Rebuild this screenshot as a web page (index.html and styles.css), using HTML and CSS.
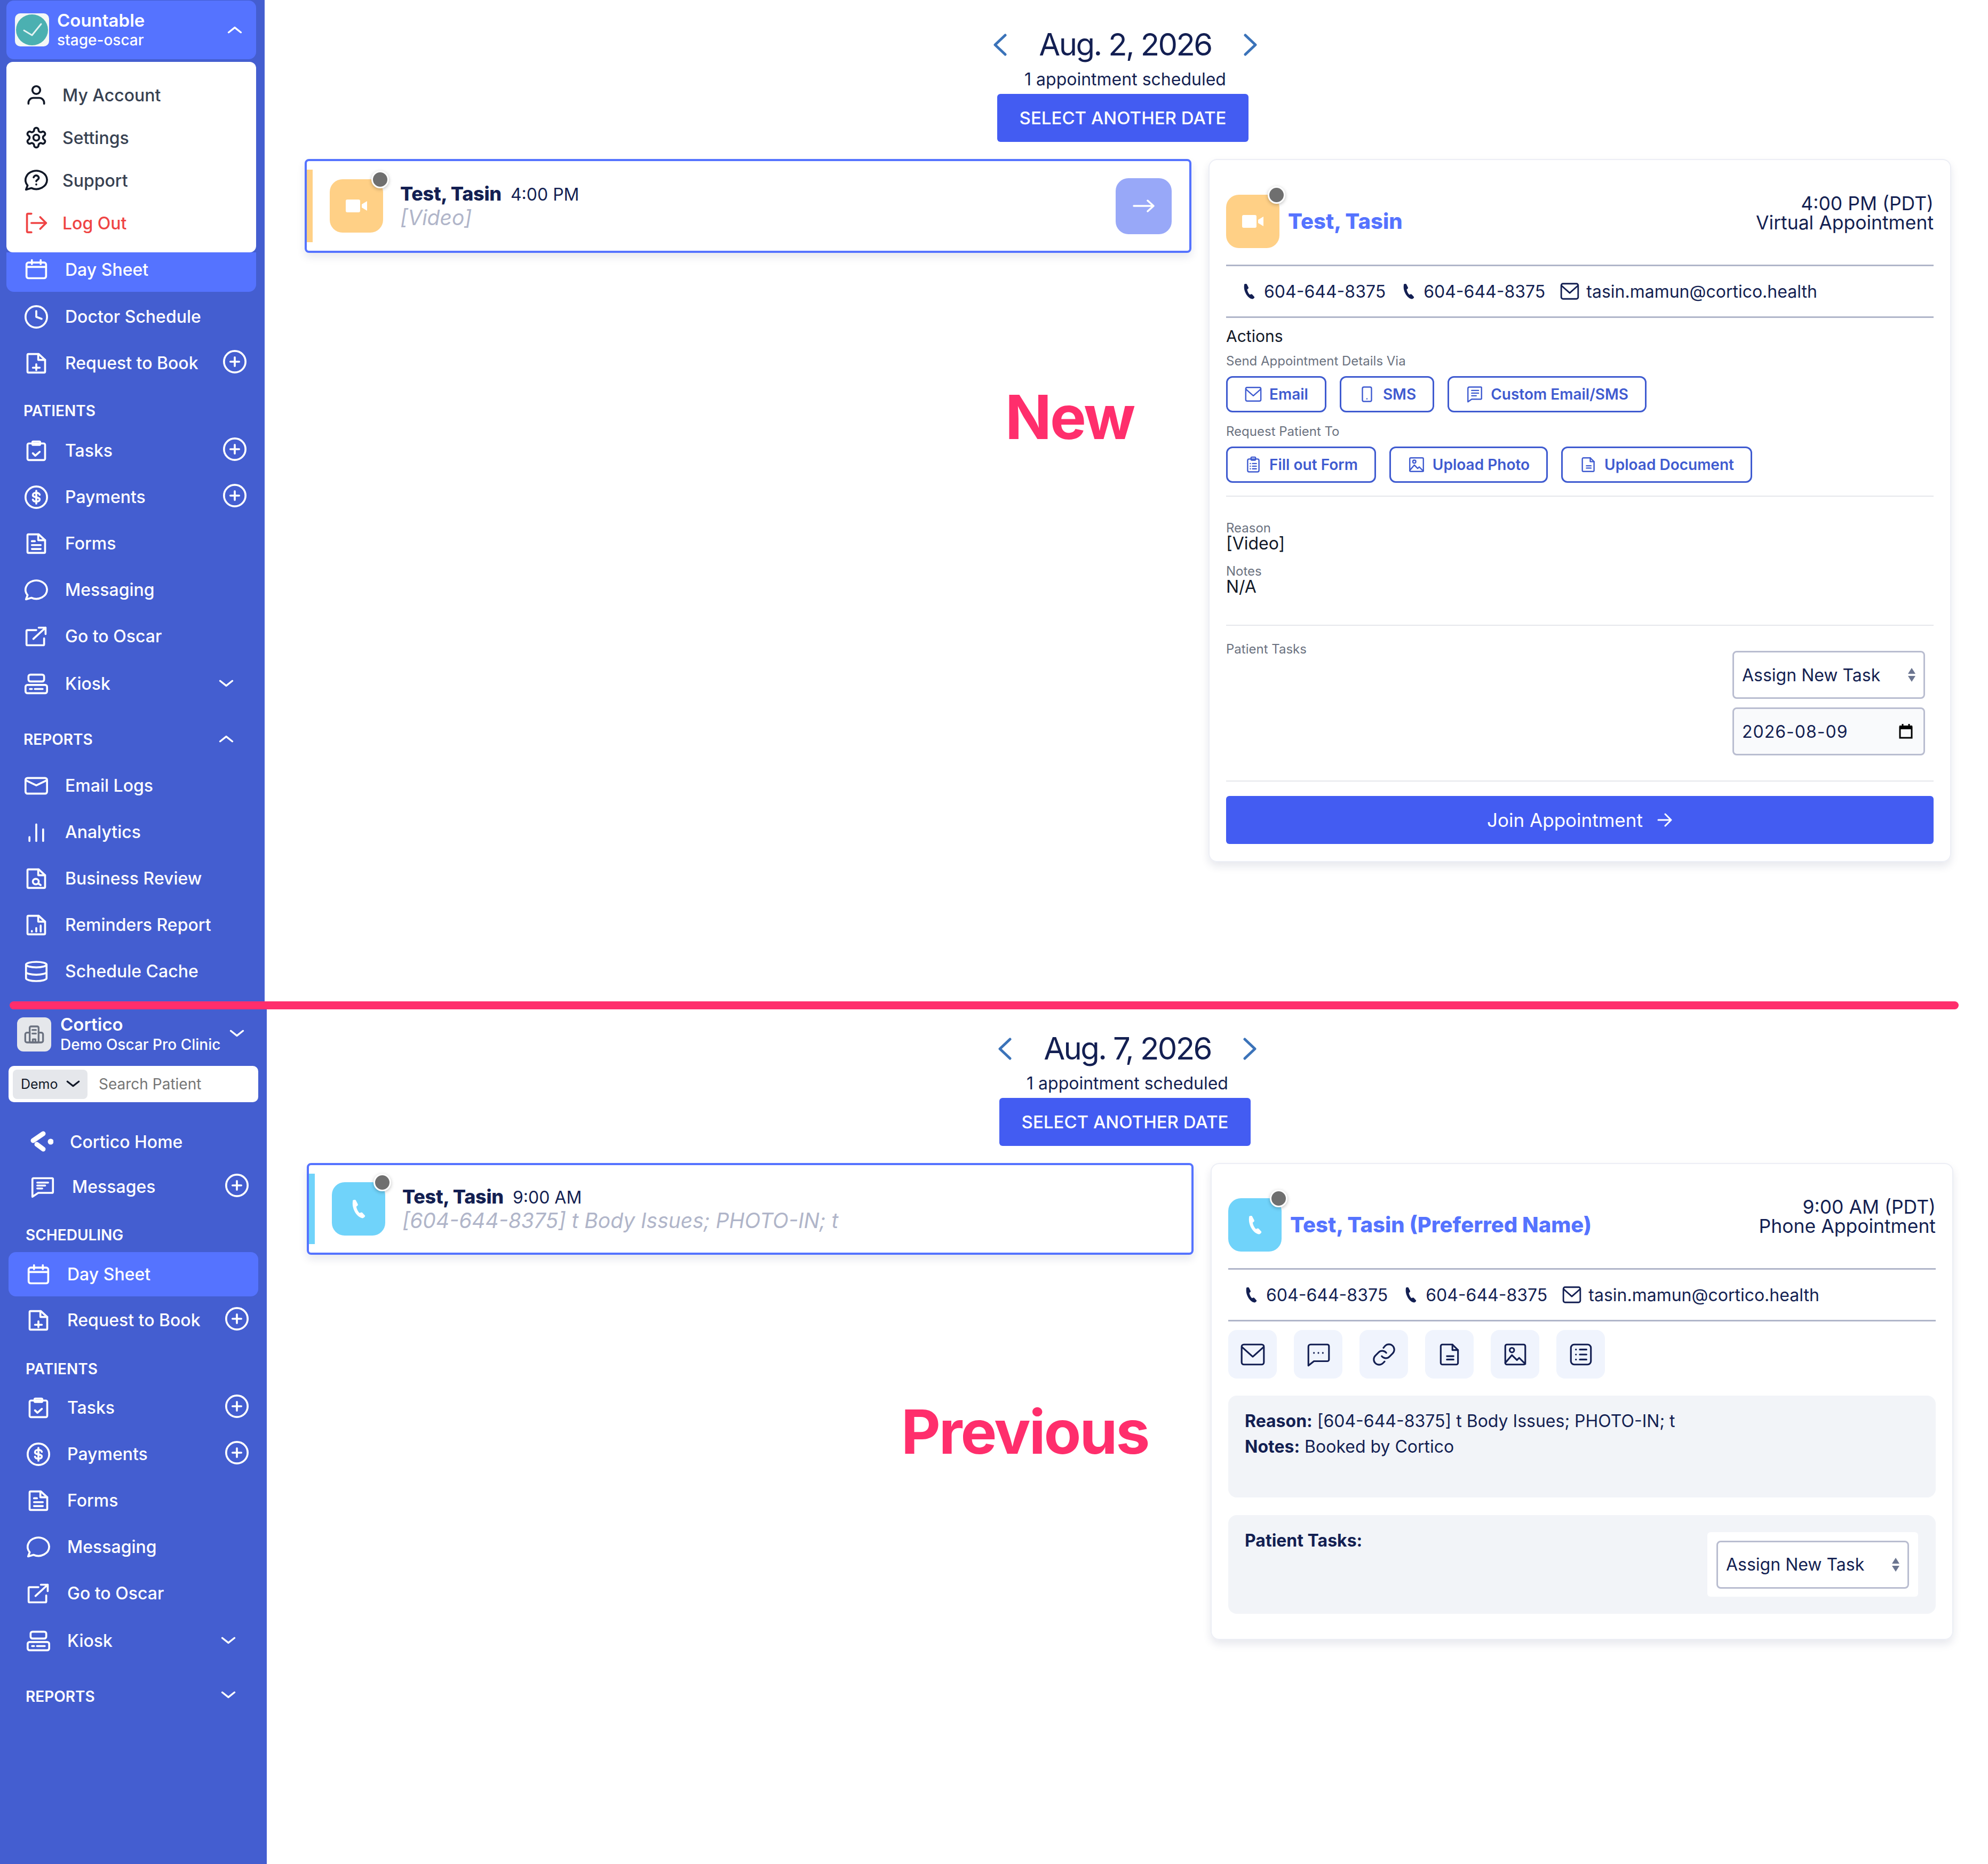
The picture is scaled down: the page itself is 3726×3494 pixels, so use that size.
FILE: index.html
```html
<!DOCTYPE html>
<html lang="en">
<head>
  <meta charset="UTF-8" />
  <meta name="viewport" content="width=device-width, initial-scale=1.0"/>
  <title>Day Sheet - New vs Previous</title>
  <link rel="stylesheet" href="styles.css">
</head>
<body>

<svg class="sprite" xmlns="http://www.w3.org/2000/svg">
  <symbol id="i-user" viewBox="0 0 24 24"><circle cx="12" cy="7" r="4"/><path d="M4 21v-1a5 5 0 0 1 5-5h6a5 5 0 0 1 5 5v1"/></symbol>
  <symbol id="i-gear" viewBox="0 0 24 24"><path d="M12.22 2h-.44a2 2 0 0 0-2 2v.18a2 2 0 0 1-1 1.73l-.43.25a2 2 0 0 1-2 0l-.15-.08a2 2 0 0 0-2.73.73l-.22.38a2 2 0 0 0 .73 2.73l.15.1a2 2 0 0 1 1 1.72v.51a2 2 0 0 1-1 1.74l-.15.09a2 2 0 0 0-.73 2.73l.22.38a2 2 0 0 0 2.73.73l.15-.08a2 2 0 0 1 2 0l.43.25a2 2 0 0 1 1 1.73V20a2 2 0 0 0 2 2h.44a2 2 0 0 0 2-2v-.18a2 2 0 0 1 1-1.73l.43-.25a2 2 0 0 1 2 0l.15.08a2 2 0 0 0 2.73-.73l.22-.39a2 2 0 0 0-.73-2.73l-.15-.08a2 2 0 0 1-1-1.74v-.5a2 2 0 0 1 1-1.74l.15-.09a2 2 0 0 0 .73-2.73l-.22-.38a2 2 0 0 0-2.73-.73l-.15.08a2 2 0 0 1-2 0l-.43-.25a2 2 0 0 1-1-1.73V4a2 2 0 0 0-2-2z"/><circle cx="12" cy="12" r="3"/></symbol>
  <symbol id="i-help" viewBox="0 0 24 24"><path d="M23 11.500a11 9.500 0 0 1-16 8.400L1.500 21.500l1.600-4.200A11 9.500 0 1 1 23 11.500z"/><path d="M9.300 9a2.700 2.700 0 0 1 5.300.6c0 1.700-2.600 2-2.600 3.400"/><path d="M12 16.200v.1"/></symbol>
  <symbol id="i-logout" viewBox="0 0 24 24"><path d="M7 2.500H3.500a1 1 0 0 0-1 1v17a1 1 0 0 0 1 1H7"/><path d="M7 12h15"/><path d="M16 6l6 6-6 6"/></symbol>
  <symbol id="i-calendar" viewBox="0 0 24 24"><rect x="2" y="5" width="20" height="16" rx="2"/><path d="M2 9.500h20M7.500 2.500v4M16.500 2.500v4"/></symbol>
  <symbol id="i-clock" viewBox="0 0 24 24"><circle cx="12" cy="12" r="11"/><path d="M12 6v6l5.500 2"/></symbol>
  <symbol id="i-fileplus" viewBox="0 0 24 24"><path d="M4 2.500h10.500l6.500 6v12a1 1 0 0 1-1 1H4a1 1 0 0 1-1-1v-17a1 1 0 0 1 1-1z"/><path d="M14 2.500v6h7M12 13v6M8.500 16.500h7"/></symbol>
  <symbol id="i-plus" viewBox="0 0 24 24"><circle cx="12" cy="12" r="11"/><path d="M12 7.500v9M7.500 12h9"/></symbol>
  <symbol id="i-tasks" viewBox="0 0 24 24"><rect x="3" y="4.500" width="18" height="17" rx="1.500"/><rect x="8" y="2.500" width="8" height="3.500" rx="1"/><path d="M8.500 14.500l2.500 2.500 4.500-4"/></symbol>
  <symbol id="i-dollar" viewBox="0 0 24 24"><circle cx="12" cy="12" r="11"/><path d="M15.500 9.500c-.4-1.200-1.800-2-3.500-2-2 0-3.500.9-3.500 2.300 0 3.200 7 1.400 7 4.400 0 1.400-1.500 2.300-3.500 2.300-1.700 0-3.100-.8-3.500-2M12 5.500v13"/></symbol>
  <symbol id="i-form" viewBox="0 0 24 24"><path d="M4 2.500h10.500l6.500 6v12a1 1 0 0 1-1 1H4a1 1 0 0 1-1-1v-17a1 1 0 0 1 1-1z"/><path d="M14 2.500v6h7M7.500 9.500h3M7.500 13.500h9M7.500 17.500h9"/></symbol>
  <symbol id="i-bubble" viewBox="0 0 24 24"><path d="M23 11.500a11 9.500 0 0 1-16 8.400L1.500 21.500l1.600-4.200A11 9.500 0 1 1 23 11.500z"/></symbol>
  <symbol id="i-external" viewBox="0 0 24 24"><path d="M12 5.500H3a1 1 0 0 0-1 1V20a1 1 0 0 0 1 1h16a1 1 0 0 0 1-1v-6"/><path d="M9 14.500L21.500 3M14.500 3h7v6.500"/></symbol>
  <symbol id="i-kiosk" viewBox="0 0 24 24"><rect x="4" y="2.500" width="16" height="7" rx="2"/><rect x="1" y="13" width="22" height="8.500" rx="2"/><path d="M5.500 17.200h2M10.500 17.200h8"/></symbol>
  <symbol id="i-chev" viewBox="0 0 24 14"><path d="M2 2l10 8 10-8"/></symbol>
  <symbol id="i-mailwide" viewBox="0 0 24 24"><rect x="1" y="4" width="22" height="16" rx="2"/><path d="M1.500 6.500L12 11.500l10.500-5"/></symbol>
  <symbol id="i-bars" viewBox="0 0 24 24"><path d="M5 21v-4M12 21V4M19 21V9"/></symbol>
  <symbol id="i-filesearch" viewBox="0 0 24 24"><path d="M4 2.500h10.500l6.500 6v12a1 1 0 0 1-1 1H4a1 1 0 0 1-1-1v-17a1 1 0 0 1 1-1z"/><path d="M14 2.500v6h7"/><ellipse cx="11.500" cy="15" rx="3" ry="2.800"/><path d="M14 17l2.500 1.600"/></symbol>
  <symbol id="i-filechart" viewBox="0 0 24 24"><path d="M4 2.500h10.500l6.500 6v12a1 1 0 0 1-1 1H4a1 1 0 0 1-1-1v-17a1 1 0 0 1 1-1z"/><path d="M14 2.500v6h7M7.500 18.500v-.5M12 18.500v-3.500M16.500 18.500v-6"/></symbol>
  <symbol id="i-db" viewBox="0 0 24 24"><ellipse cx="12" cy="5" rx="10.500" ry="2.800"/><path d="M1.500 5v14c0 1.500 4.700 2.800 10.500 2.800s10.500-1.300 10.500-2.800V5M1.500 12.500c0 1.500 4.700 2.800 10.500 2.800s10.500-1.300 10.500-2.800"/></symbol>
  <symbol id="i-msglines" viewBox="0 0 24 24"><path d="M2.500 3h19a1 1 0 0 1 1 1v13a1 1 0 0 1-1 1H7.500l-6 4V4a1 1 0 0 1 1-1z"/><path d="M6.500 7.500h11M6.500 10.500h8M6.500 13.500h5"/></symbol>
  <symbol id="i-building" viewBox="0 0 24 24"><rect x="7" y="3" width="10" height="18" rx="1.500"/><path d="M7 10H4a2 2 0 0 0-2 2v7a2 2 0 0 0 2 2h16a2 2 0 0 0 2-2v-7a2 2 0 0 0-2-2h-3"/><path d="M10 7h4M10 11h4M10.500 21v-3.500h3V21"/></symbol>
  <symbol id="i-mail" viewBox="0 0 24 24"><rect x="2" y="3" width="20" height="18" rx="2"/><path d="M2.500 5.500L12 14l9.500-8.500"/></symbol>
  <symbol id="i-phone-s" viewBox="0 0 24 24"><rect x="6" y="2.500" width="12" height="19" rx="2"/><path d="M12 18v.1"/></symbol>
  <symbol id="i-custom" viewBox="0 0 24 24"><path d="M5 2.500h15a1 1 0 0 1 1 1v14a1 1 0 0 1-1 1H8L3 22V4.500a2 2 0 0 1 2-2z"/><path d="M8 7h9M8 10.500h9M8 14h6"/></symbol>
  <symbol id="i-clip" viewBox="0 0 24 24"><rect x="4.500" y="4.500" width="15" height="17" rx="2"/><rect x="9" y="2" width="6" height="4" rx="1"/><path d="M8 10.500h.1M11 10.500h5M8 14h.1M11 14h5M8 17.500h.1M11 17.500h5"/></symbol>
  <symbol id="i-photo" viewBox="0 0 24 24"><rect x="3" y="3" width="18" height="18" rx="1.500"/><circle cx="9" cy="8" r="2"/><path d="M3 19.500l6-7 4.500 4.500 2-2 5.500 5.500"/></symbol>
  <symbol id="i-doc" viewBox="0 0 24 24"><path d="M5.500 3h9l5 5v11.500a1.500 1.500 0 0 1-1.500 1.500H5.500A1.500 1.500 0 0 1 4 19.500v-15A1.500 1.500 0 0 1 5.500 3z"/><path d="M14.500 3v5h5M9.500 13.500h6M9.500 16.500h6"/></symbol>
  <symbol id="i-dots" viewBox="0 0 24 24"><path d="M5 3h15a1.500 1.500 0 0 1 1.500 1.500v12A1.500 1.500 0 0 1 20 18H8l-5 4V5a2 2 0 0 1 2-2z"/><path d="M8 10.500v.1M12 10.500v.1M16 10.500v.1"/></symbol>
  <symbol id="i-link" viewBox="0 0 24 24"><path d="M10 13.500a4.500 4.500 0 0 0 6.800.5l3-3a4.800 4.800 0 0 0-6.800-6.800L11.500 6"/><path d="M14 10.500a4.500 4.500 0 0 0-6.800-.5l-3 3a4.800 4.800 0 0 0 6.800 6.800l1.500-1.500"/></symbol>
  <symbol id="i-list" viewBox="0 0 24 24"><rect x="3" y="3" width="18" height="18" rx="3"/><path d="M7.500 7.500h.1M11 7.500h6M7.500 12h.1M11 12h6M7.500 16.500h.1M11 16.500h6"/></symbol>
  <symbol id="i-handset" viewBox="0 0 24 30"><path d="M3 3C2 1 7 0 8 2l3 6c.5 2-2 3-2.500 3.500.5 3.500 2.500 7.500 5 10 1.500-.5 3-2 4.500-.5l4 4.500c1 1.500-2 4-4 4C9 28 1 14 3 3z"/></symbol>
</svg>

<div class="divider"></div>

<!-- new design -->
<section class="shot shot-new">
  <aside class="sidebar">
    <div class="account">
      <div class="account-logo">
        <svg viewBox="0 0 64 62"><ellipse cx="32" cy="31" rx="30" ry="29" fill="#4bb0b1"/><path d="M17 32l15 9 17-21" fill="none" stroke="#e4f3f2" stroke-width="3" stroke-linecap="round" stroke-linejoin="round"/></svg>
      </div>
      <div class="account-text">
        <strong>Countable</strong>
        <span>stage-oscar</span>
      </div>
      <svg class="chev chev-account flip"><use href="#i-chev"/></svg>
    </div>
    <div class="menu">
      <a class="menu-item"><svg class="ico"><use href="#i-user"/></svg>My Account</a>
      <a class="menu-item"><svg class="ico"><use href="#i-gear"/></svg>Settings</a>
      <a class="menu-item"><svg class="ico"><use href="#i-help"/></svg>Support</a>
      <a class="menu-item menu-danger"><svg class="ico"><use href="#i-logout"/></svg>Log Out</a>
    </div>
    <a class="nav-row nav-active nav-under-menu"><svg class="ico"><use href="#i-calendar"/></svg>Day Sheet</a>
    <a class="nav-row nav-tight"><svg class="ico"><use href="#i-clock"/></svg>Doctor Schedule</a>
    <a class="nav-row"><svg class="ico"><use href="#i-fileplus"/></svg>Request to Book<svg class="ico add"><use href="#i-plus"/></svg></a>
    <div class="nav-label label-patients">PATIENTS</div>
    <a class="nav-row"><svg class="ico"><use href="#i-tasks"/></svg>Tasks<svg class="ico add"><use href="#i-plus"/></svg></a>
    <a class="nav-row"><svg class="ico"><use href="#i-dollar"/></svg>Payments<svg class="ico add"><use href="#i-plus"/></svg></a>
    <a class="nav-row"><svg class="ico"><use href="#i-form"/></svg>Forms</a>
    <a class="nav-row"><svg class="ico"><use href="#i-bubble"/></svg>Messaging</a>
    <a class="nav-row"><svg class="ico"><use href="#i-external"/></svg>Go to Oscar</a>
    <a class="nav-row nav-kiosk"><svg class="ico"><use href="#i-kiosk"/></svg>Kiosk<svg class="chev"><use href="#i-chev"/></svg></a>
    <div class="nav-label label-reports">REPORTS<svg class="chev flip"><use href="#i-chev"/></svg></div>
    <a class="nav-row"><svg class="ico"><use href="#i-mailwide"/></svg>Email Logs</a>
    <a class="nav-row"><svg class="ico"><use href="#i-bars"/></svg>Analytics</a>
    <a class="nav-row"><svg class="ico"><use href="#i-filesearch"/></svg>Business Review</a>
    <a class="nav-row"><svg class="ico"><use href="#i-filechart"/></svg>Reminders Report</a>
    <a class="nav-row"><svg class="ico"><use href="#i-db"/></svg>Schedule Cache</a>
  </aside>

  <main class="main">
    <div class="date-head">
      <div class="date-row">
        <svg class="date-arrow" viewBox="0 0 26 42"><path d="M23 3L4 21l19 18"/></svg>
        <h2>Aug. 2, 2026</h2>
        <svg class="date-arrow" viewBox="0 0 26 42"><path d="M3 3l19 18L3 39"/></svg>
      </div>
      <p class="date-count">1 appointment scheduled</p>
      <button class="date-btn">SELECT ANOTHER DATE</button>
    </div>

    <div class="panes">
      <div class="appt-card">
        <span class="appt-bar bar-video"></span>
        <div class="tile tile-video appt-tile">
          <svg class="tile-ico" viewBox="0 0 40 24"><rect width="27" height="24" rx="3" fill="#fff"/><path d="M30 9l10-6v18l-10-6z" fill="#fff"/></svg>
          <span class="dot"></span>
        </div>
        <div class="appt-text">
          <div class="appt-title"><strong>Test, Tasin</strong><span>4:00 PM</span></div>
          <div class="appt-reason">[Video]</div>
        </div>
        <div class="appt-go"><svg viewBox="0 0 42 24"><path d="M2 12h37M28 2l11 10-11 10"/></svg></div>
      </div>

      <div class="detail">
        <div class="detail-head">
          <div class="tile tile-video">
            <svg class="tile-ico" viewBox="0 0 40 24"><rect width="27" height="24" rx="3" fill="#fff"/><path d="M30 9l10-6v18l-10-6z" fill="#fff"/></svg>
            <span class="dot"></span>
          </div>
          <h3>Test, Tasin</h3>
          <div class="detail-when">4:00 PM (PDT)<br>Virtual Appointment</div>
        </div>
        <div class="contact">
          <span class="contact-item"><svg class="phone"><use href="#i-handset"/></svg>604-644-8375</span>
          <span class="contact-item"><svg class="phone"><use href="#i-handset"/></svg>604-644-8375</span>
          <span class="contact-item"><svg class="ico-mail"><use href="#i-mail"/></svg>tasin.mamun@cortico.health</span>
        </div>

        <div class="actions-title">Actions</div>
        <div class="small-label send-label">Send Appointment Details Via</div>
        <div class="btn-row">
          <button class="out-btn"><svg><use href="#i-mail"/></svg>Email</button>
          <button class="out-btn"><svg><use href="#i-phone-s"/></svg>SMS</button>
          <button class="out-btn"><svg><use href="#i-custom"/></svg>Custom Email/SMS</button>
        </div>
        <div class="small-label request-label">Request Patient To</div>
        <div class="btn-row">
          <button class="out-btn"><svg><use href="#i-clip"/></svg>Fill out Form</button>
          <button class="out-btn"><svg><use href="#i-photo"/></svg>Upload Photo</button>
          <button class="out-btn"><svg><use href="#i-doc"/></svg>Upload Document</button>
        </div>
        <hr class="rule rule-1">

        <div class="small-label reason-label">Reason</div>
        <div class="field-value">[Video]</div>
        <div class="small-label notes-label">Notes</div>
        <div class="field-value">N/A</div>
        <hr class="rule rule-2">

        <div class="tasks-row">
          <div class="small-label">Patient Tasks</div>
          <div class="tasks-fields">
            <div class="fake-select">Assign New Task
              <svg class="stepper" viewBox="0 0 14 28"><path d="M7 1l7 11H0zM7 27l7-11H0z"/></svg>
            </div>
            <div class="fake-date">2026-08-09
              <svg class="cal" viewBox="0 0 26 28"><path d="M2 6h22v20H2z" fill="none" stroke="#000" stroke-width="3"/><path d="M1 3h24v7H1z" fill="#000"/><path d="M7 0v4M19 0v4" stroke="#000" stroke-width="3"/></svg>
            </div>
          </div>
        </div>
        <hr class="rule rule-3">

        <button class="join-btn">Join Appointment<svg viewBox="0 0 30 30"><path d="M3 15h24M16 4l11 11-11 11"/></svg></button>
      </div>
    </div>
  </main>
  <div class="note note-new">New</div>
</section>

<!-- previous design -->
<section class="shot shot-old">
  <aside class="sidebar">
    <div class="clinic">
      <div class="clinic-logo"><svg><use href="#i-building"/></svg></div>
      <div class="clinic-text">
        <strong>Cortico</strong>
        <span>Demo Oscar Pro Clinic</span>
      </div>
      <svg class="chev chev-clinic"><use href="#i-chev"/></svg>
    </div>
    <div class="search">
      <div class="search-scope">Demo<svg class="chev"><use href="#i-chev"/></svg></div>
      <span class="search-hint">Search Patient</span>
    </div>
    <a class="nav-row nav-home">
      <svg class="ico home-logo" viewBox="0 0 44 44"><path class="home-arm" d="M25 7L6 20"/><path class="home-arm" d="M13 27l12 9"/><circle cx="39" cy="22" r="5.500"/></svg>
      Cortico Home</a>
    <a class="nav-row nav-msg"><svg class="ico"><use href="#i-msglines"/></svg>Messages<svg class="ico add"><use href="#i-plus"/></svg></a>
    <div class="nav-label label-sched">SCHEDULING</div>
    <a class="nav-row nav-active nav-old-day"><svg class="ico"><use href="#i-calendar"/></svg>Day Sheet</a>
    <a class="nav-row nav-tight"><svg class="ico"><use href="#i-fileplus"/></svg>Request to Book<svg class="ico add"><use href="#i-plus"/></svg></a>
    <div class="nav-label label-patients">PATIENTS</div>
    <a class="nav-row"><svg class="ico"><use href="#i-tasks"/></svg>Tasks<svg class="ico add"><use href="#i-plus"/></svg></a>
    <a class="nav-row"><svg class="ico"><use href="#i-dollar"/></svg>Payments<svg class="ico add"><use href="#i-plus"/></svg></a>
    <a class="nav-row"><svg class="ico"><use href="#i-form"/></svg>Forms</a>
    <a class="nav-row"><svg class="ico"><use href="#i-bubble"/></svg>Messaging</a>
    <a class="nav-row"><svg class="ico"><use href="#i-external"/></svg>Go to Oscar</a>
    <a class="nav-row nav-kiosk"><svg class="ico"><use href="#i-kiosk"/></svg>Kiosk<svg class="chev"><use href="#i-chev"/></svg></a>
    <div class="nav-label label-reports">REPORTS<svg class="chev"><use href="#i-chev"/></svg></div>
  </aside>

  <main class="main">
    <div class="date-head">
      <div class="date-row">
        <svg class="date-arrow" viewBox="0 0 26 42"><path d="M23 3L4 21l19 18"/></svg>
        <h2>Aug. 7, 2026</h2>
        <svg class="date-arrow" viewBox="0 0 26 42"><path d="M3 3l19 18L3 39"/></svg>
      </div>
      <p class="date-count">1 appointment scheduled</p>
      <button class="date-btn">SELECT ANOTHER DATE</button>
    </div>

    <div class="panes">
      <div class="appt-card appt-card-old">
        <span class="appt-bar bar-phone"></span>
        <div class="tile tile-phone appt-tile">
          <svg class="tile-ico"><use href="#i-handset"/></svg>
          <span class="dot"></span>
        </div>
        <div class="appt-text">
          <div class="appt-title"><strong>Test, Tasin</strong><span>9:00 AM</span></div>
          <div class="appt-reason">[604-644-8375] t Body Issues; PHOTO-IN; t</div>
        </div>
      </div>

      <div class="detail">
        <div class="detail-head">
          <div class="tile tile-phone">
            <svg class="tile-ico"><use href="#i-handset"/></svg>
            <span class="dot"></span>
          </div>
          <h3>Test, Tasin (Preferred Name)</h3>
          <div class="detail-when">9:00 AM (PDT)<br>Phone Appointment</div>
        </div>
        <div class="contact">
          <span class="contact-item"><svg class="phone"><use href="#i-handset"/></svg>604-644-8375</span>
          <span class="contact-item"><svg class="phone"><use href="#i-handset"/></svg>604-644-8375</span>
          <span class="contact-item"><svg class="ico-mail"><use href="#i-mail"/></svg>tasin.mamun@cortico.health</span>
        </div>

        <div class="icon-row">
          <a class="icon-btn"><svg><use href="#i-mail"/></svg></a>
          <a class="icon-btn"><svg><use href="#i-dots"/></svg></a>
          <a class="icon-btn"><svg><use href="#i-link"/></svg></a>
          <a class="icon-btn"><svg><use href="#i-doc"/></svg></a>
          <a class="icon-btn"><svg><use href="#i-photo"/></svg></a>
          <a class="icon-btn"><svg><use href="#i-list"/></svg></a>
        </div>

        <div class="info-box">
          <p><b>Reason:</b> [604-644-8375] t Body Issues; PHOTO-IN; t</p>
          <p><b>Notes:</b> Booked by Cortico</p>
        </div>

        <div class="tasks-box">
          <b>Patient Tasks:</b>
          <div class="select-wrap">
            <div class="fake-select">Assign New Task
              <svg class="stepper" viewBox="0 0 14 28"><path d="M7 1l7 11H0zM7 27l7-11H0z"/></svg>
            </div>
          </div>
        </div>
      </div>
    </div>
  </main>
  <div class="note note-old">Previous</div>
</section>

</body>
</html>
```

FILE: styles.css
```css
* {
  box-sizing: border-box;
}

body {
  font-family: 'Inter', 'Liberation Sans', sans-serif;
  margin: 0;
  background: #fff;
  color: #131f52;
  position: relative;
}

.sprite {
  display: none;
}

.divider {
  position: absolute;
  left: 18px;
  top: 1877px;
  width: 3653px;
  height: 15px;
  border-radius: 8px;
  background: #ff2e6c;
  z-index: 5;
}

.shot {
  display: flex;
  position: relative;
}

.shot-new {
  height: 1882px;
}

.shot-old {
  height: 1612px;
}

/* sidebar */
.sidebar {
  background: #445ed0;
  color: #fff;
  flex: none;
  display: flex;
  flex-direction: column;
  font-size: 32px;
  font-weight: 500;
}

.shot-new .sidebar {
  width: 496px;
}

.shot-old .sidebar {
  width: 500px;
}

.account {
  margin: 1px 16px 0 12px;
  height: 110px;
  background: #5573ff;
  border-radius: 14px;
  display: flex;
  align-items: center;
  padding-left: 16px;
}

.account-logo {
  width: 64px;
  height: 62px;
  background: #f3f7f6;
  border-radius: 10px;
  flex: none;
  margin-right: 15px;
}

.account-logo svg {
  display: block;
  width: 64px;
  height: 62px;
}

.account-text,
.clinic-text {
  display: flex;
  flex-direction: column;
  flex: 1;
}

.account-text strong {
  font-size: 33px;
  font-weight: 600;
  line-height: 38px;
}

.account-text span {
  font-size: 28px;
  line-height: 36px;
}

.menu {
  margin: 5px 16px 0 12px;
  height: 357px;
  background: #fff;
  border-radius: 12px;
  padding: 22px 0 0;
  position: relative;
  z-index: 1;
}

.menu-item {
  display: flex;
  align-items: center;
  height: 80px;
  padding-left: 34px;
  color: #374151;
  gap: 27px;
}

.menu-item .ico {
  color: #111827;
}

.menu-danger,
.menu-danger .ico {
  color: #ef4444 !important;
}

.ico {
  width: 44px;
  height: 44px;
  flex: none;
  fill: none;
  stroke: currentColor;
  stroke-width: 2;
  stroke-linecap: round;
  stroke-linejoin: round;
}

.nav-row {
  display: flex;
  align-items: center;
  height: 87px;
  margin: 0 16px 0 12px;
  padding: 0 18px 0 34px;
  gap: 32px;
}

.shot-old .nav-row {
  margin: 0 16px;
}

.nav-active {
  background: #5573ff;
  border-radius: 14px;
}

.nav-under-menu {
  height: 74px;
  padding-bottom: 10px;
  border-radius: 0 0 14px 14px;
}

.nav-tight {
  margin-top: 1px !important;
}

.shot-new .nav-tight {
  margin-top: 3px !important;
}

.nav-kiosk {
  margin-top: 2px !important;
}

.add {
  margin-left: auto;
  margin-top: -6px;
}

.chev {
  width: 28px;
  height: 16px;
  margin-left: auto;
  margin-right: 24px;
  fill: none;
  stroke: currentColor;
  stroke-width: 3;
  stroke-linecap: round;
  stroke-linejoin: round;
  flex: none;
}

.flip {
  transform: rotate(180deg);
}

.chev-account {
  margin-right: 26px;
  margin-top: -2px;
}

.nav-label {
  display: flex;
  font-size: 28px;
  font-weight: 600;
  line-height: 32px;
  margin: 0 16px 0 12px;
  padding: 0 18px 0 32px;
  align-items: center;
}

.shot-old .nav-label {
  margin: 0 16px;
}

.label-patients {
  height: 77px;
  padding-top: 32px;
  align-items: flex-start;
}

.shot-new .label-patients {
  padding-top: 30px;
}

.label-reports {
  height: 104px;
  padding-top: 45px;
  align-items: flex-start;
}

.label-reports .chev {
  margin-top: 6px;
}

.label-sched {
  height: 81px;
  padding-top: 33px;
  align-items: flex-start;
}

.clinic {
  margin-top: 25px;
  height: 64px;
  display: flex;
  align-items: center;
  padding-left: 32px;
}

.clinic-logo {
  width: 64px;
  height: 64px;
  background: #e5e7eb;
  border-radius: 12px;
  margin-right: 17px;
  flex: none;
  display: flex;
  align-items: center;
  justify-content: center;
}

.clinic-logo svg {
  width: 40px;
  height: 40px;
  fill: none;
  stroke: #6b7280;
  stroke-width: 2;
  stroke-linecap: round;
  stroke-linejoin: round;
}

.clinic-text strong {
  font-size: 33px;
  font-weight: 600;
  line-height: 38px;
}

.clinic-text span {
  font-size: 28px;
  line-height: 38px;
}

.chev-clinic {
  margin-right: 42px;
  margin-top: -2px;
}

.search {
  margin: 27px 16px 0;
  height: 68px;
  background: #fff;
  border-radius: 10px;
  display: flex;
  align-items: center;
  padding-left: 8px;
}

.search-scope {
  width: 140px;
  height: 55px;
  background: #e5e7eb;
  border-radius: 8px;
  color: #111827;
  font-size: 25px;
  font-weight: 400;
  display: flex;
  align-items: center;
  padding-left: 15px;
}

.search-scope .chev {
  width: 26px;
  height: 15px;
  margin-right: 14px;
  stroke-width: 3;
}

.search-hint {
  color: #757575;
  font-size: 28px;
  font-weight: 400;
  margin-left: 21px;
}

.nav-home {
  margin-top: 31px !important;
  height: 86px;
  padding-left: 40px;
  gap: 31px;
}

.home-logo {
  fill: #fff;
  stroke: none;
}

.home-arm {
  fill: none;
  stroke: #fff;
  stroke-width: 9;
}

.nav-msg {
  height: 83px;
  padding-left: 42px;
  gap: 33px;
}

.nav-old-day {
  height: 83px;
}

/* main area */
.main {
  flex: 1;
  padding-left: 75px;
}

.date-head {
  width: 3076px;
  text-align: center;
  display: flex;
  flex-direction: column;
  align-items: center;
  padding-top: 56px;
}

.date-row {
  display: flex;
  align-items: center;
  justify-content: center;
  gap: 60px;
  height: 58px;
}

.date-row h2 {
  margin: -4px 0 0;
  font-size: 58px;
  line-height: 58px;
  font-weight: 400;
  letter-spacing: -2.6px;
}

.date-arrow {
  width: 26px;
  height: 42px;
  fill: none;
  stroke: #3b73b9;
  stroke-width: 5;
  stroke-linecap: round;
  stroke-linejoin: round;
  margin-top: -2px;
}

.date-count {
  margin: 17px 0 0;
  font-size: 32px;
  line-height: 36px;
}

.date-btn {
  margin: 9px 9px 0 0;
  width: 471px;
  height: 90px;
  background: #435cf2;
  color: #fff;
  border: none;
  border-radius: 6px;
  font: inherit;
  font-size: 33px;
  font-weight: 500;
}

.panes {
  display: flex;
  gap: 32px;
  align-items: flex-start;
  margin-top: 32px;
}

.appt-card {
  width: 1662px;
  height: 176px;
  border: 4px solid #5573ff;
  border-radius: 8px;
  display: flex;
  align-items: center;
  box-shadow: 0 8px 16px rgba(19,31,82,0.1);
}

.appt-card-old {
  height: 172px;
}

.appt-bar {
  width: 11px;
  height: 136px;
  flex: none;
}

.appt-card-old .appt-bar {
  height: 132px;
}

.bar-video {
  background: #ffd086;
}

.bar-phone {
  background: #70d3fa;
}

.tile {
  width: 100px;
  height: 100px;
  border-radius: 24px;
  flex: none;
  position: relative;
  display: flex;
  align-items: center;
  justify-content: center;
}

.tile-video {
  background: #ffd086;
}

.tile-phone {
  background: #70d3fa;
}

.appt-tile {
  margin-left: 32px;
}

.tile-video .tile-ico {
  width: 40px;
  height: 24px;
}

.tile-phone .tile-ico {
  width: 30px;
  height: 36px;
  fill: #fff;
}

.dot {
  position: absolute;
  top: -16px;
  right: -11px;
  width: 33px;
  height: 33px;
  border-radius: 50%;
  background: #6f6f6f;
  border: 3px solid #fff;
  box-shadow: 0 2px 6px rgba(0,0,0,0.25);
}

.appt-text {
  margin-left: 32px;
}

.appt-title {
  height: 44px;
  line-height: 44px;
  display: flex;
  align-items: baseline;
  gap: 17px;
  font-size: 32px;
}

.appt-title strong {
  font-size: 36px;
  font-weight: 800;
  letter-spacing: -0.3px;
}

.appt-reason {
  height: 46px;
  line-height: 46px;
  font-size: 39px;
  font-style: italic;
  color: #b0b5c9;
}

.appt-go {
  margin-left: auto;
  margin-right: 33px;
  width: 105px;
  height: 105px;
  background: #98a8f8;
  border-radius: 24px;
  display: flex;
  align-items: center;
  justify-content: center;
}

.appt-go svg {
  width: 42px;
  height: 24px;
  fill: none;
  stroke: #fff;
  stroke-width: 3.500;
  stroke-linecap: round;
  stroke-linejoin: round;
}

/* appointment detail */
.detail {
  width: 1392px;
  border: 2px solid #eceef5;
  border-radius: 16px;
  padding: 65px 31px 32px;
  box-shadow: 0 8px 16px rgba(19,31,82,0.1);
}

.shot-old .detail {
  height: 894px;
  padding-top: 64px;
}

.detail-head {
  display: flex;
  align-items: center;
  padding-bottom: 31px;
  border-bottom: 3px solid #b0b5c9;
}

.detail-head h3 {
  margin: -2px 0 0 16px;
  flex: 1;
  font-size: 40px;
  font-weight: 800;
  color: #5573ff;
}

.detail-when {
  text-align: right;
  font-size: 35.5px;
  line-height: 36px;
  margin-top: -30px;
}

.contact {
  height: 97px;
  border-bottom: 3px solid #b0b5c9;
  display: flex;
  align-items: center;
  padding-left: 30px;
  gap: 30px;
  font-size: 32px;
}

.contact-item {
  display: flex;
  align-items: center;
  gap: 15px;
}

.phone {
  width: 26px;
  height: 30px;
  fill: #131f52;
}

.ico-mail {
  width: 38px;
  height: 38px;
  margin-left: -3px;
  margin-right: -3px;
  fill: none;
  stroke: #131f52;
  stroke-width: 1.800;
  stroke-linecap: round;
  stroke-linejoin: round;
}

.actions-title {
  margin-top: 16px;
  font-size: 30px;
  line-height: 36px;
  color: #111827;
}

.small-label {
  font-size: 24px;
  line-height: 30px;
  color: #6b7280;
}

.send-label {
  margin-top: 14px;
}

.request-label {
  margin-top: 21px;
}

.btn-row {
  display: flex;
  gap: 25px;
  margin-top: 13px;
}

.out-btn {
  display: flex;
  align-items: center;
  gap: 13px;
  height: 68px;
  padding: 0 31px;
  background: #fff;
  border: 3px solid #3f5bd0;
  border-radius: 12px;
  color: #3f5bd0;
  font: inherit;
  font-size: 28px;
  font-weight: 600;
}

.out-btn svg {
  width: 34px;
  height: 34px;
  fill: none;
  stroke: currentColor;
  stroke-width: 1.700;
  stroke-linecap: round;
  stroke-linejoin: round;
}

.rule {
  border: none;
  height: 2px;
  margin: 0;
  background: #e5e7eb;
}

.rule-1 {
  margin-top: 24px;
}

.reason-label {
  margin-top: 47px;
  line-height: 24px;
}

.notes-label {
  margin-top: 23px;
  line-height: 24px;
}

.field-value {
  font-size: 32px;
  line-height: 34px;
  color: #111827;
}

.rule-2 {
  margin-top: 54px;
}

.tasks-row {
  display: flex;
  justify-content: space-between;
  padding: 32px 16px 0 0;
}

.tasks-row .small-label {
  line-height: 24px;
}

.tasks-fields {
  margin-top: 15px;
  display: flex;
  flex-direction: column;
  gap: 16px;
}

.fake-select,
.fake-date {
  width: 361px;
  height: 90px;
  border: 3px solid #b9bdd0;
  border-radius: 8px;
  font-size: 32px;
  display: flex;
  align-items: center;
  justify-content: space-between;
  padding: 0 14px 0 15px;
}

.fake-date {
  background: #f9fafc;
  letter-spacing: 1px;
  padding-right: 20px;
}

.stepper {
  width: 16px;
  height: 28px;
  fill: #6b7590;
}

.cal {
  width: 26px;
  height: 28px;
}

.rule-3 {
  margin-top: 47px;
}

.join-btn {
  margin-top: 27px;
  width: 100%;
  height: 90px;
  background: #435cf2;
  color: #fff;
  border: none;
  border-radius: 6px;
  font: inherit;
  font-size: 35px;
  display: flex;
  align-items: center;
  justify-content: center;
  gap: 26px;
}

.join-btn svg {
  width: 30px;
  height: 30px;
  fill: none;
  stroke: #fff;
  stroke-width: 3;
  stroke-linecap: round;
  stroke-linejoin: round;
}

.icon-row {
  display: flex;
  gap: 32px;
  margin-top: 16px;
}

.icon-btn {
  width: 91px;
  height: 91px;
  background: #f0f4fd;
  border-radius: 16px;
  display: flex;
  align-items: center;
  justify-content: center;
}

.icon-btn svg {
  width: 50px;
  height: 50px;
  fill: none;
  stroke: #131f52;
  stroke-width: 1.500;
  stroke-linecap: round;
  stroke-linejoin: round;
}

.info-box {
  margin-top: 32px;
  height: 191px;
  background: #f2f4f8;
  border-radius: 16px;
  padding: 24px 31px;
  font-size: 32px;
  line-height: 48px;
}

.info-box p {
  margin: 0;
}

.tasks-box {
  margin-top: 33px;
  height: 185px;
  background: #f2f4f8;
  border-radius: 16px;
  padding: 32px 33px 32px 31px;
  font-size: 32px;
  line-height: 32px;
  display: flex;
  justify-content: space-between;
  align-items: flex-start;
}

.select-wrap {
  background: #fff;
  border-radius: 6px;
  padding: 16px 17px;
  height: 121px;
}

/* annotations */
.note {
  position: absolute;
  color: #ff2e6c;
  font-weight: 700;
  font-size: 114px;
  letter-spacing: -3px;
  line-height: 1;
}

.note-new {
  left: 1884px;
  top: 725px;
}

.note-old {
  left: 1689px;
  top: 745px;
}
```
